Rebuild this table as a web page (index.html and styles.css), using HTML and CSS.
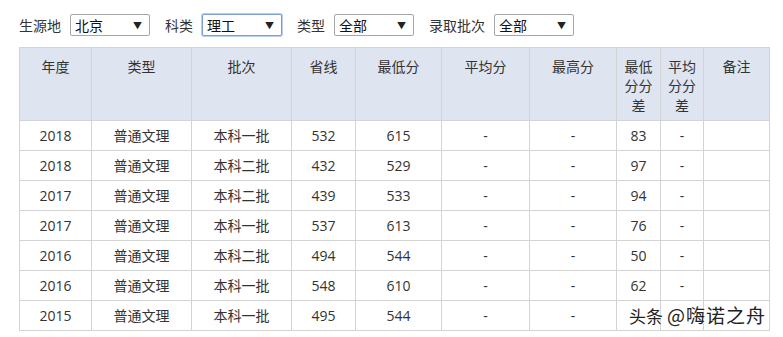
FILE: index.html
```html
<!DOCTYPE html>
<html lang="zh">
<head>
<meta charset="utf-8">
<link rel="stylesheet" href="styles.css">
</head>
<body>
<div class="page">
  <div class="filters">
    <span class="label">生源地</span>
    <div class="select"><span>北京</span><span class="arrow">▼</span></div>
    <span class="label">科类</span>
    <div class="select focus"><span>理工</span><span class="arrow">▼</span></div>
    <span class="label">类型</span>
    <div class="select"><span>全部</span><span class="arrow">▼</span></div>
    <span class="label">录取批次</span>
    <div class="select"><span>全部</span><span class="arrow">▼</span></div>
  </div>
  <table class="scores">
    <colgroup>
      <col style="width:72px"><col style="width:100px"><col style="width:100px"><col style="width:64px"><col style="width:86px"><col style="width:88px"><col style="width:87px"><col style="width:44px"><col style="width:43px"><col style="width:66px">
    </colgroup>
    <thead>
      <tr><th>年度</th><th>类型</th><th>批次</th><th>省线</th><th>最低分</th><th>平均分</th><th>最高分</th><th>最低分分差</th><th>平均分分差</th><th>备注</th></tr>
    </thead>
    <tbody>
      <tr><td>2018</td><td>普通文理</td><td>本科一批</td><td>532</td><td>615</td><td>-</td><td>-</td><td>83</td><td>-</td><td></td></tr>
      <tr><td>2018</td><td>普通文理</td><td>本科二批</td><td>432</td><td>529</td><td>-</td><td>-</td><td>97</td><td>-</td><td></td></tr>
      <tr><td>2017</td><td>普通文理</td><td>本科二批</td><td>439</td><td>533</td><td>-</td><td>-</td><td>94</td><td>-</td><td></td></tr>
      <tr><td>2017</td><td>普通文理</td><td>本科一批</td><td>537</td><td>613</td><td>-</td><td>-</td><td>76</td><td>-</td><td></td></tr>
      <tr><td>2016</td><td>普通文理</td><td>本科二批</td><td>494</td><td>544</td><td>-</td><td>-</td><td>50</td><td>-</td><td></td></tr>
      <tr><td>2016</td><td>普通文理</td><td>本科一批</td><td>548</td><td>610</td><td>-</td><td>-</td><td>62</td><td>-</td><td></td></tr>
      <tr><td>2015</td><td>普通文理</td><td>本科一批</td><td>495</td><td>544</td><td>-</td><td>-</td><td></td><td></td><td></td></tr>
    </tbody>
  </table>
  <div class="watermark"><span class="wm-brand">头条</span> <span class="wm-name">@嗨诺之舟</span></div>
</div>
</body>
</html>
```
FILE: styles.css
```css
html, body {
  margin: 0;
  padding: 0;
  background: #ffffff;
}
body {
  font-family: "Open Sans", "Noto Sans CJK SC", sans-serif;
  font-size: 14px;
  color: #333333;
}
.page {
  position: relative;
  padding: 14px 0 0 19px;
  height: 323px;
}
.filters {
  display: flex;
  align-items: center;
  height: 22px;
}
.label {
  font-family: "Noto Sans CJK SC", sans-serif;
  margin-right: 9px;
  color: #333;
  line-height: 22px;
}
.select {
  box-sizing: border-box;
  width: 80px;
  height: 22px;
  border: 1px solid #a6a6a6;
  border-radius: 2px;
  margin-right: 15px;
  display: flex;
  align-items: center;
  justify-content: space-between;
  padding: 0 7px 0 4px;
  font-family: "Noto Sans CJK SC", sans-serif;
  color: #111;
  background: #fff;
}
.select.focus {
  border-color: #7d9fd6;
  box-shadow: 0 0 0 1px #b9cdee;
}
.arrow {
  font-size: 9px;
  color: #222;
  line-height: 1;
}
.scores {
  margin-top: 11px;
  border-collapse: collapse;
  table-layout: fixed;
  width: 750px;
}
.scores th, .scores td {
  border: 1px solid #d3d3d3;
  text-align: center;
  padding: 0 2px;
}
.scores th {
  background: #dfe5f0;
  font-weight: normal;
  font-family: "Noto Sans CJK SC", sans-serif;
  vertical-align: top;
  height: 73px;
  box-sizing: border-box;
  padding-top: 9px;
  line-height: 19.3px;
  color: #333;
}
.scores td {
  height: 29px;
  line-height: 20px;
  padding-top: 0;
  padding-bottom: 0;
}
.watermark {
  position: absolute;
  left: 629px;
  top: 302px;
  font-family: "Noto Sans CJK SC", sans-serif;
  font-size: 18px;
  line-height: 26px;
  color: #222;
  white-space: nowrap;
  text-shadow: 0 0 2px #fff, 0 0 2px #fff, 0 0 2px #fff;
}
.wm-brand {
  font-size: 17px;
}
.wm-name {
  font-size: 19px;
  letter-spacing: 1px;
}
```
